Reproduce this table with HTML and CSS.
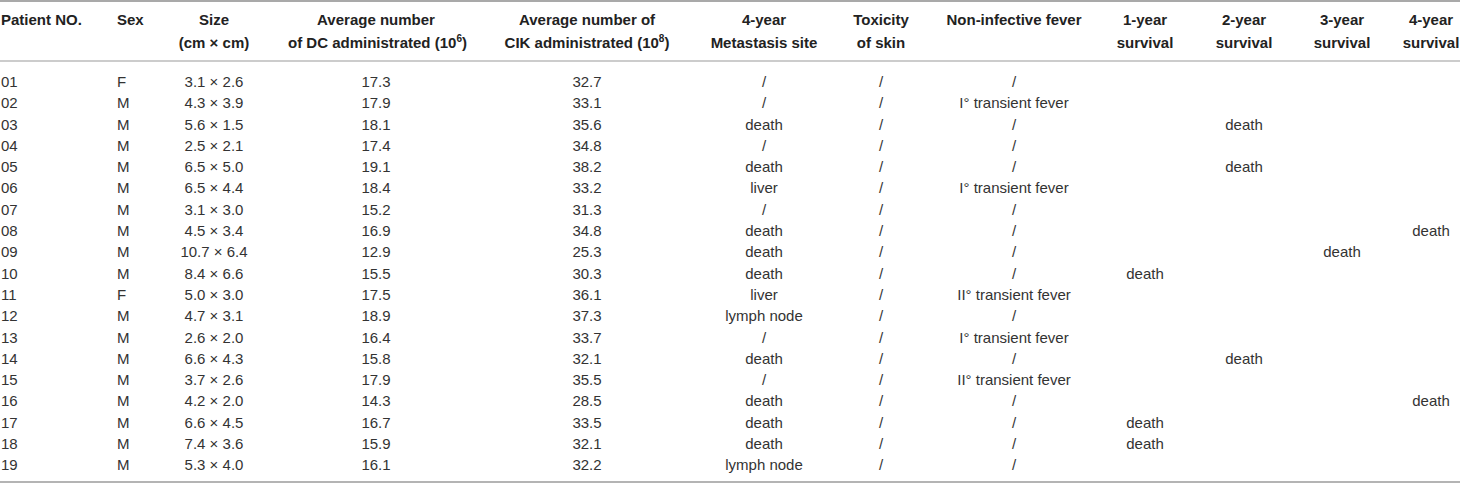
FILE: index.html
```html
<!DOCTYPE html>
<html>
 <head>
  <title>DC-CIK patients</title>
  <link rel="stylesheet" href="styles.css">
 </head>
 <body>
  <table class="results">
   <colgroup>
    <col class="c-id">
    <col class="c-sex">
    <col class="c-size">
    <col class="c-dc">
    <col class="c-cik">
    <col class="c-meta">
    <col class="c-tox">
    <col class="c-fever">
    <col class="c-y1">
    <col class="c-y2">
    <col class="c-y3">
    <col class="c-y4">
   </colgroup>
   <thead>
    <tr>
     <th class="left">Patient NO.</th>
     <th class="left">Sex</th>
     <th>Size<br>(cm × cm)</th>
     <th>Average number<br>of DC administrated (10<sup>6</sup>)</th>
     <th>Average number of<br>CIK administrated (10<sup>8</sup>)</th>
     <th>4-year<br>Metastasis site</th>
     <th>Toxicity<br>of skin</th>
     <th>Non-infective fever<br>&nbsp;</th>
     <th>1-year<br>survival</th>
     <th>2-year<br>survival</th>
     <th>3-year<br>survival</th>
     <th>4-year<br>survival</th>
    </tr>
   </thead>
   <tbody>
    <tr class="first"><td class="left">01</td><td class="left">F</td><td>3.1 × 2.6</td><td>17.3</td><td>32.7</td><td>/</td><td>/</td><td>/</td><td></td><td></td><td></td><td></td></tr>
    <tr><td class="left">02</td><td class="left">M</td><td>4.3 × 3.9</td><td>17.9</td><td>33.1</td><td>/</td><td>/</td><td>I° transient fever</td><td></td><td></td><td></td><td></td></tr>
    <tr><td class="left">03</td><td class="left">M</td><td>5.6 × 1.5</td><td>18.1</td><td>35.6</td><td>death</td><td>/</td><td>/</td><td></td><td>death</td><td></td><td></td></tr>
    <tr><td class="left">04</td><td class="left">M</td><td>2.5 × 2.1</td><td>17.4</td><td>34.8</td><td>/</td><td>/</td><td>/</td><td></td><td></td><td></td><td></td></tr>
    <tr><td class="left">05</td><td class="left">M</td><td>6.5 × 5.0</td><td>19.1</td><td>38.2</td><td>death</td><td>/</td><td>/</td><td></td><td>death</td><td></td><td></td></tr>
    <tr><td class="left">06</td><td class="left">M</td><td>6.5 × 4.4</td><td>18.4</td><td>33.2</td><td>liver</td><td>/</td><td>I° transient fever</td><td></td><td></td><td></td><td></td></tr>
    <tr><td class="left">07</td><td class="left">M</td><td>3.1 × 3.0</td><td>15.2</td><td>31.3</td><td>/</td><td>/</td><td>/</td><td></td><td></td><td></td><td></td></tr>
    <tr><td class="left">08</td><td class="left">M</td><td>4.5 × 3.4</td><td>16.9</td><td>34.8</td><td>death</td><td>/</td><td>/</td><td></td><td></td><td></td><td>death</td></tr>
    <tr><td class="left">09</td><td class="left">M</td><td>10.7 × 6.4</td><td>12.9</td><td>25.3</td><td>death</td><td>/</td><td>/</td><td></td><td></td><td>death</td><td></td></tr>
    <tr><td class="left">10</td><td class="left">M</td><td>8.4 × 6.6</td><td>15.5</td><td>30.3</td><td>death</td><td>/</td><td>/</td><td>death</td><td></td><td></td><td></td></tr>
    <tr><td class="left">11</td><td class="left">F</td><td>5.0 × 3.0</td><td>17.5</td><td>36.1</td><td>liver</td><td>/</td><td>II° transient fever</td><td></td><td></td><td></td><td></td></tr>
    <tr><td class="left">12</td><td class="left">M</td><td>4.7 × 3.1</td><td>18.9</td><td>37.3</td><td>lymph node</td><td>/</td><td>/</td><td></td><td></td><td></td><td></td></tr>
    <tr><td class="left">13</td><td class="left">M</td><td>2.6 × 2.0</td><td>16.4</td><td>33.7</td><td>/</td><td>/</td><td>I° transient fever</td><td></td><td></td><td></td><td></td></tr>
    <tr><td class="left">14</td><td class="left">M</td><td>6.6 × 4.3</td><td>15.8</td><td>32.1</td><td>death</td><td>/</td><td>/</td><td></td><td>death</td><td></td><td></td></tr>
    <tr><td class="left">15</td><td class="left">M</td><td>3.7 × 2.6</td><td>17.9</td><td>35.5</td><td>/</td><td>/</td><td>II° transient fever</td><td></td><td></td><td></td><td></td></tr>
    <tr><td class="left">16</td><td class="left">M</td><td>4.2 × 2.0</td><td>14.3</td><td>28.5</td><td>death</td><td>/</td><td>/</td><td></td><td></td><td></td><td>death</td></tr>
    <tr><td class="left">17</td><td class="left">M</td><td>6.6 × 4.5</td><td>16.7</td><td>33.5</td><td>death</td><td>/</td><td>/</td><td>death</td><td></td><td></td><td></td></tr>
    <tr><td class="left">18</td><td class="left">M</td><td>7.4 × 3.6</td><td>15.9</td><td>32.1</td><td>death</td><td>/</td><td>/</td><td>death</td><td></td><td></td><td></td></tr>
    <tr class="last"><td class="left">19</td><td class="left">M</td><td>5.3 × 4.0</td><td>16.1</td><td>32.2</td><td>lymph node</td><td>/</td><td>/</td><td></td><td></td><td></td><td></td></tr>
   </tbody>
  </table>
 </body>
</html>
```
FILE: styles.css
```css
body {
 margin:      0;
 font-family: "Liberation Sans", Arial, Helvetica, sans-serif;
 font-size:   15px;
 background:  #ffffff;
 color:       #333333;
}

.results {
 width:           1460px;
 table-layout:    fixed;
 border-collapse: collapse;
 border-top:      2px solid #a9a9a9;
 border-bottom:   2px solid #b4b4b4;
}

.c-id    { width: 117px; }
.c-sex   { width: 23px; }
.c-size  { width: 148px; }
.c-dc    { width: 176px; }
.c-cik   { width: 246px; }
.c-meta  { width: 108px; }
.c-tox   { width: 126px; }
.c-fever { width: 140px; }
.c-y1    { width: 122px; }
.c-y2    { width: 76px; }
.c-y3    { width: 120px; }
.c-y4    { width: 58px; }

.results th,
.results td {
 padding:     0;
 text-align:  center;
 white-space: nowrap;
 overflow:    visible;
 font-weight: normal;
}

.results th {
 font-weight:    bold;
 color:          #222222;
 line-height:    22.5px;
 padding-top:    7px;
 padding-bottom: 6px;
 border-bottom:  2px solid #cccccc;
 vertical-align: top;
}

.results td {
 line-height: 21.3px;
 height:      21.3px;
}

.results .left {
 text-align: left;
}

.results th.left:first-child,
.results td.left:first-child {
 padding-left: 1px;
}

.results tr.first td {
 padding-top: 9px;
}

.results tr.last td {
 padding-bottom: 5px;
}

.results sup {
 font-size:      10px;
 line-height:    0;
 vertical-align: 6px;
}
```
